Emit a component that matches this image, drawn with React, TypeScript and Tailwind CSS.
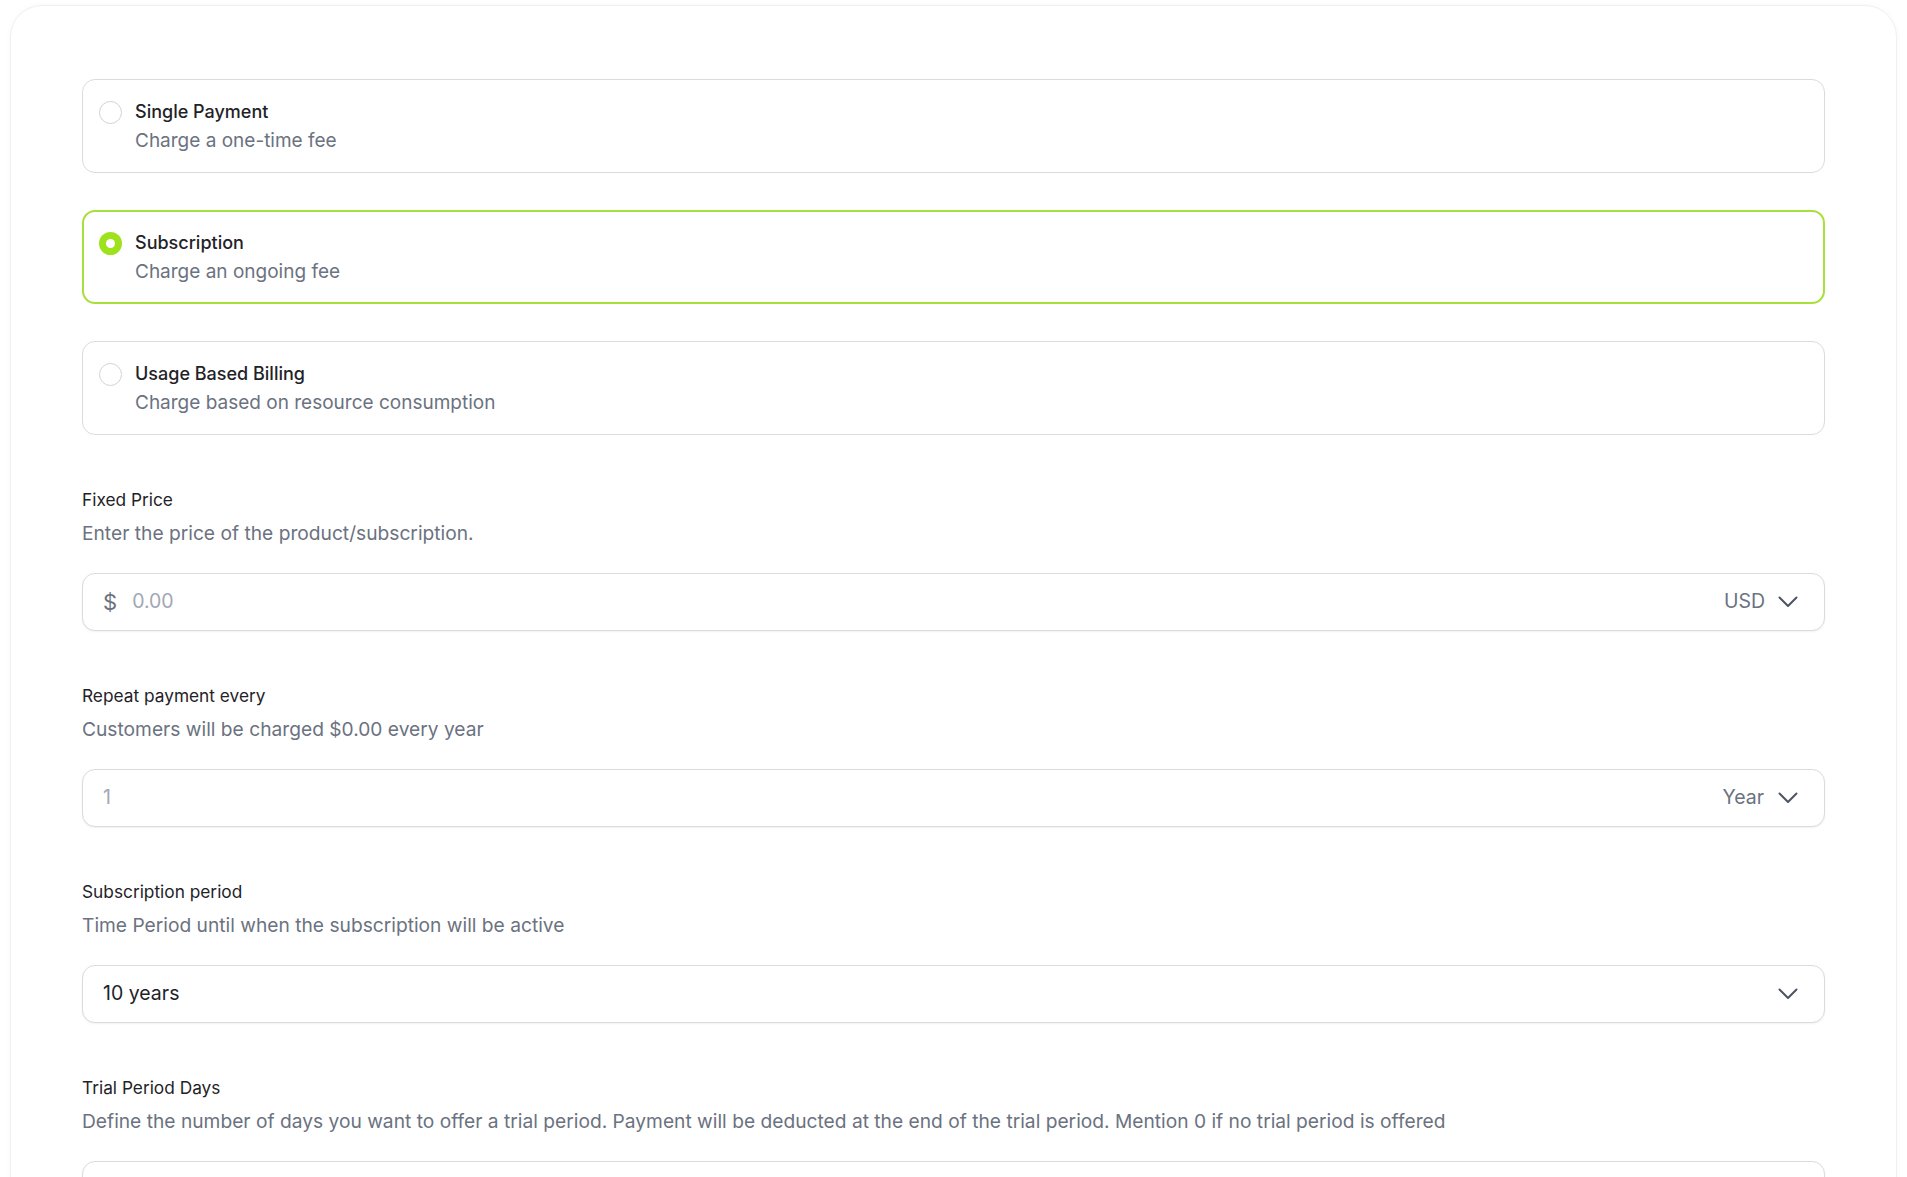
import { useState } from "react";

const options = [
  { id: "single", title: "Single Payment", description: "Charge a one-time fee" },
  { id: "subscription", title: "Subscription", description: "Charge an ongoing fee" },
  { id: "usage", title: "Usage Based Billing", description: "Charge based on resource consumption" },
];

const Chevron = () => (
  <svg width="20" height="12" viewBox="0 0 20 12" fill="none" stroke="#4b5563" strokeWidth="2" strokeLinecap="round" strokeLinejoin="round">
    <path d="M1.5 1.5 10 10 18.5 1.5" />
  </svg>
);

const Field = ({ label, hint, children }: { label: string; hint: string; children: React.ReactNode }) => (
  <div className="mt-[53px]">
    <div className="text-[17.3px] leading-[24px] text-[#1f2328]">{label}</div>
    <div className="mt-[8px] text-[19.2px] leading-[26px] text-[#6b7280]">{hint}</div>
    <div className="mt-[27px] flex h-[58px] items-center rounded-[13px] border border-[#d9dbe0] bg-white pl-[20px] pr-[26px] shadow-[0_1px_2px_rgba(16,24,40,0.06)]">
      {children}
    </div>
  </div>
);

export default function App() {
  const [selected, setSelected] = useState("subscription");

  return (
    <div className="min-h-screen bg-white px-[10px] pt-[5px] font-['Inter',sans-serif]">
      <div className="rounded-[32px] border border-[#f0f0f2] bg-white px-[71px] pt-[73px] pb-20 shadow-[0_0_6px_rgba(0,0,0,0.03)]">
        {/* billing type */}
        <div className="flex flex-col gap-[37px]">
          {options.map((o) => {
            const active = o.id === selected;
            return (
              <button
                key={o.id}
                onClick={() => setSelected(o.id)}
                className={
                  active
                    ? "flex h-[94px] gap-[12px] rounded-[13px] border-2 border-[#a8e03a] bg-white pl-[15px] pt-[19px] text-left"
                    : "flex h-[94px] gap-[12px] rounded-[13px] border border-[#d9dbe0] bg-white pl-[16px] pt-[20px] text-left"
                }
              >
                {active ? (
                  <span className="mt-[0.5px] flex h-[23px] w-[23px] shrink-0 items-center justify-center rounded-full bg-[#9ee11d]">
                    <span className="h-[9px] w-[9px] rounded-full bg-white" />
                  </span>
                ) : (
                  <span className="mt-[0.5px] h-[23px] w-[23px] shrink-0 rounded-full border-[1.5px] border-[#d0d3d9]" />
                )}
                <span className="flex flex-col pl-[1px]">
                  <span className="text-[18px] font-medium leading-[24px] text-[#1f2328]">{o.title}</span>
                  <span className="mt-[5px] text-[19px] leading-[24px] text-[#6b7280]">{o.description}</span>
                </span>
              </button>
            );
          })}
        </div>

        <Field label="Fixed Price" hint="Enter the price of the product/subscription.">
          <span className="text-[22px] text-[#6b7280]">$</span>
          <span className="ml-[15px] flex-1 text-[19.5px] text-[#a1a7b3]">0.00</span>
          <span className="text-[19.5px] text-[#6b7280]">USD</span>
          <span className="ml-[13px]"><Chevron /></span>
        </Field>

        <Field label="Repeat payment every" hint="Customers will be charged $0.00 every year">
          <span className="flex-1 text-[19.5px] text-[#a1a7b3]">1</span>
          <span className="text-[19.5px] text-[#6b7280]">Year</span>
          <span className="ml-[14px]"><Chevron /></span>
        </Field>

        <Field label="Subscription period" hint="Time Period until when the subscription will be active">
          <span className="flex-1 text-[19.5px] text-[#1f2328]">10 years</span>
          <Chevron />
        </Field>

        <Field
          label="Trial Period Days"
          hint="Define the number of days you want to offer a trial period. Payment will be deducted at the end of the trial period. Mention 0 if no trial period is offered"
        >
          <span className="flex-1 text-[19.5px] text-[#a1a7b3]">0</span>
        </Field>
      </div>
    </div>
  );
}
